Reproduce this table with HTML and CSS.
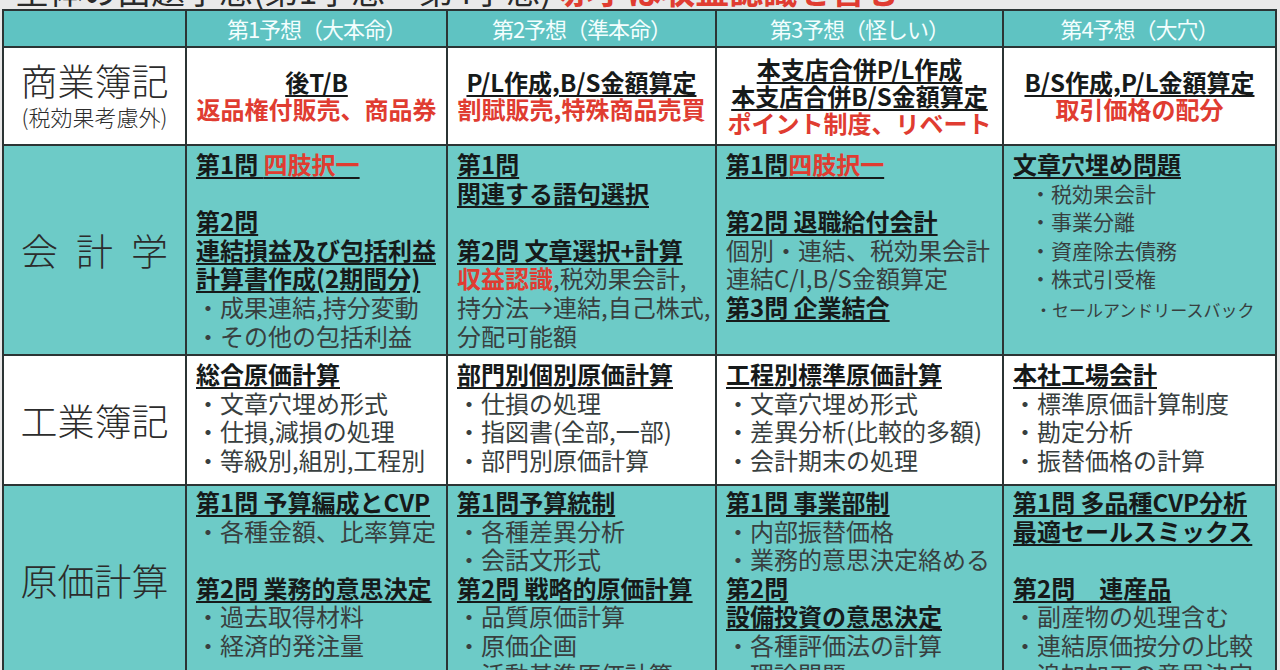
FILE: index.html
```html
<!DOCTYPE html>
<html lang="ja">
<head>
<meta charset="utf-8">
<title>全体の出題予想</title>
<link rel="stylesheet" href="styles.css">
</head>
<body>
<div class="title"><span class="title-text">全体の出題予想(第1予想〜第4予想) <span class="red b">赤字は収益認識を含む</span></span></div>
<div class="grid">
  <div class="hd"></div>
  <div class="hd">第1予想（大本命）</div>
  <div class="hd">第2予想（準本命）</div>
  <div class="hd">第3予想（怪しい）</div>
  <div class="hd">第4予想（大穴）</div>

  <div class="lbl white">
    <div class="lbl-main">商業簿記</div>
    <div class="lbl-sub">(税効果考慮外)</div>
  </div>
  <div class="cell white mid">
    <div class="ln b"><u>後T/B</u></div>
    <div class="ln b red">返品権付販売、商品券</div>
  </div>
  <div class="cell white mid">
    <div class="ln b"><u>P/L作成,B/S金額算定</u></div>
    <div class="ln b red">割賦販売,特殊商品売買</div>
  </div>
  <div class="cell white mid">
    <div class="ln b"><u>本支店合併P/L作成</u></div>
    <div class="ln b"><u>本支店合併B/S金額算定</u></div>
    <div class="ln b red">ポイント制度、リベート</div>
  </div>
  <div class="cell white mid">
    <div class="ln b"><u>B/S作成,P/L金額算定</u></div>
    <div class="ln b red">取引価格の配分</div>
  </div>

  <div class="lbl teal"><div class="lbl-main spaced">会計学</div></div>
  <div class="cell teal">
    <div class="ln b"><u>第1問 <span class="red">四肢択一</span></u></div>
    <div class="ln"></div>
    <div class="ln b"><u>第2問</u></div>
    <div class="ln b"><u>連結損益及び包括利益</u></div>
    <div class="ln b"><u>計算書作成(2期間分)</u></div>
    <div class="ln">・成果連結,持分変動</div>
    <div class="ln">・その他の包括利益</div>
  </div>
  <div class="cell teal">
    <div class="ln b"><u>第1問</u></div>
    <div class="ln b"><u>関連する語句選択</u></div>
    <div class="ln"></div>
    <div class="ln b"><u>第2問 文章選択+計算</u></div>
    <div class="ln"><span class="b red">収益認識</span>,税効果会計,</div>
    <div class="ln">持分法→連結,自己株式,</div>
    <div class="ln">分配可能額</div>
  </div>
  <div class="cell teal">
    <div class="ln b"><u>第1問<span class="red">四肢択一</span></u></div>
    <div class="ln"></div>
    <div class="ln b"><u>第2問 退職給付会計</u></div>
    <div class="ln">個別・連結、税効果会計</div>
    <div class="ln">連結C/I,B/S金額算定</div>
    <div class="ln b"><u>第3問 企業結合</u></div>
  </div>
  <div class="cell teal">
    <div class="ln b"><u>文章穴埋め問題</u></div>
    <div class="ln sm">・税効果会計</div>
    <div class="ln sm">・事業分離</div>
    <div class="ln sm">・資産除去債務</div>
    <div class="ln sm">・株式引受権</div>
    <div class="ln xs">・セールアンドリースバック</div>
  </div>

  <div class="lbl white"><div class="lbl-main">工業簿記</div></div>
  <div class="cell white">
    <div class="ln b"><u>総合原価計算</u></div>
    <div class="ln">・文章穴埋め形式</div>
    <div class="ln">・仕損,減損の処理</div>
    <div class="ln">・等級別,組別,工程別</div>
  </div>
  <div class="cell white">
    <div class="ln b"><u>部門別個別原価計算</u></div>
    <div class="ln">・仕損の処理</div>
    <div class="ln">・指図書(全部,一部)</div>
    <div class="ln">・部門別原価計算</div>
  </div>
  <div class="cell white">
    <div class="ln b"><u>工程別標準原価計算</u></div>
    <div class="ln">・文章穴埋め形式</div>
    <div class="ln">・差異分析(比較的多額)</div>
    <div class="ln">・会計期末の処理</div>
  </div>
  <div class="cell white">
    <div class="ln b"><u>本社工場会計</u></div>
    <div class="ln">・標準原価計算制度</div>
    <div class="ln">・勘定分析</div>
    <div class="ln">・振替価格の計算</div>
  </div>

  <div class="lbl teal lbl-top"><div class="lbl-main">原価計算</div></div>
  <div class="cell teal tight">
    <div class="ln b"><u>第1問 予算編成とCVP</u></div>
    <div class="ln">・各種金額、比率算定</div>
    <div class="ln"></div>
    <div class="ln b"><u>第2問 業務的意思決定</u></div>
    <div class="ln">・過去取得材料</div>
    <div class="ln">・経済的発注量</div>
  </div>
  <div class="cell teal tight">
    <div class="ln b"><u>第1問予算統制</u></div>
    <div class="ln">・各種差異分析</div>
    <div class="ln">・会話文形式</div>
    <div class="ln b"><u>第2問 戦略的原価計算</u></div>
    <div class="ln">・品質原価計算</div>
    <div class="ln">・原価企画</div>
    <div class="ln">・活動基準原価計算</div>
  </div>
  <div class="cell teal tight">
    <div class="ln b"><u>第1問 事業部制</u></div>
    <div class="ln">・内部振替価格</div>
    <div class="ln">・業務的意思決定絡める</div>
    <div class="ln b"><u>第2問</u></div>
    <div class="ln b"><u>設備投資の意思決定</u></div>
    <div class="ln">・各種評価法の計算</div>
    <div class="ln">・理論問題</div>
  </div>
  <div class="cell teal tight">
    <div class="ln b"><u>第1問 多品種CVP分析</u></div>
    <div class="ln b"><u>最適セールスミックス</u></div>
    <div class="ln"></div>
    <div class="ln b"><u>第2問　連産品</u></div>
    <div class="ln">・副産物の処理含む</div>
    <div class="ln">・連結原価按分の比較</div>
    <div class="ln">・追加加工の意思決定</div>
  </div>
</div>
</body>
</html>
```

FILE: styles.css
```css
html, body {
  margin: 0;
  padding: 0;
}
body {
  background: #e9e9e9;
  font-family: "Noto Sans CJK JP", "Noto Sans", sans-serif;
  height: 670px;
  overflow: hidden;
}
.title {
  height: 9px;
  overflow: hidden;
  padding-left: 15px;
}
.title-text {
  display: block;
  font-size: 34px;
  line-height: 34px;
  margin-top: -27px;
  color: #2a2a2a;
  white-space: nowrap;
}
.grid {
  display: grid;
  margin-left: 2px;
  width: 1275px;
  box-sizing: border-box;
  padding: 2px;
  gap: 2px;
  background: #2b3434;
  grid-template-columns: 181px 259px 267px 285px 271px;
  grid-template-rows: 35px 96px 208px 128px 240px;
}
.hd {
  background: #5fc3c2;
  color: #f3fefe;
  font-size: 22px;
  letter-spacing: -1px;
  display: flex;
  align-items: center;
  justify-content: center;
  white-space: nowrap;
  padding-bottom: 1px;
}
.white { background: #ffffff; }
.teal { background: #6dcbc7; }
.lbl {
  display: flex;
  flex-direction: column;
  align-items: center;
  justify-content: center;
  color: #2c2c2c;
  font-weight: 300;
}
.lbl-top {
  justify-content: flex-start;
  padding-top: 74px;
}
.lbl-main {
  font-size: 37px;
  line-height: 40px;
  white-space: nowrap;
}
.lbl-main.spaced {
  letter-spacing: 18px;
  margin-right: -18px;
}
.lbl-sub {
  font-size: 22px;
  line-height: 32px;
  white-space: nowrap;
}
.cell {
  padding: 4px 4px 0 9px;
  font-size: 24px;
  line-height: 28.6px;
  color: #383f3f;
  white-space: nowrap;
  overflow: hidden;
}
.cell.tight {
  padding-top: 2px;
}
.cell.mid {
  display: flex;
  flex-direction: column;
  align-items: center;
  justify-content: center;
  padding: 0 4px 2px;
  line-height: 27px;
}
.ln {
  min-height: 28.6px;
}
.mid .ln {
  min-height: 27px;
}
.b {
  font-weight: 700;
  color: #161a1a;
}
.red, .b.red, .b .red {
  color: #e03c31;
}
u {
  text-decoration: underline;
  text-decoration-thickness: 2px;
  text-underline-offset: 3px;
}
.ln.sm {
  font-size: 21px;
  padding-left: 17px;
  line-height: 28.6px;
}
.ln.xs {
  font-size: 17px;
  padding-left: 22px;
  line-height: 34px;
}
```
